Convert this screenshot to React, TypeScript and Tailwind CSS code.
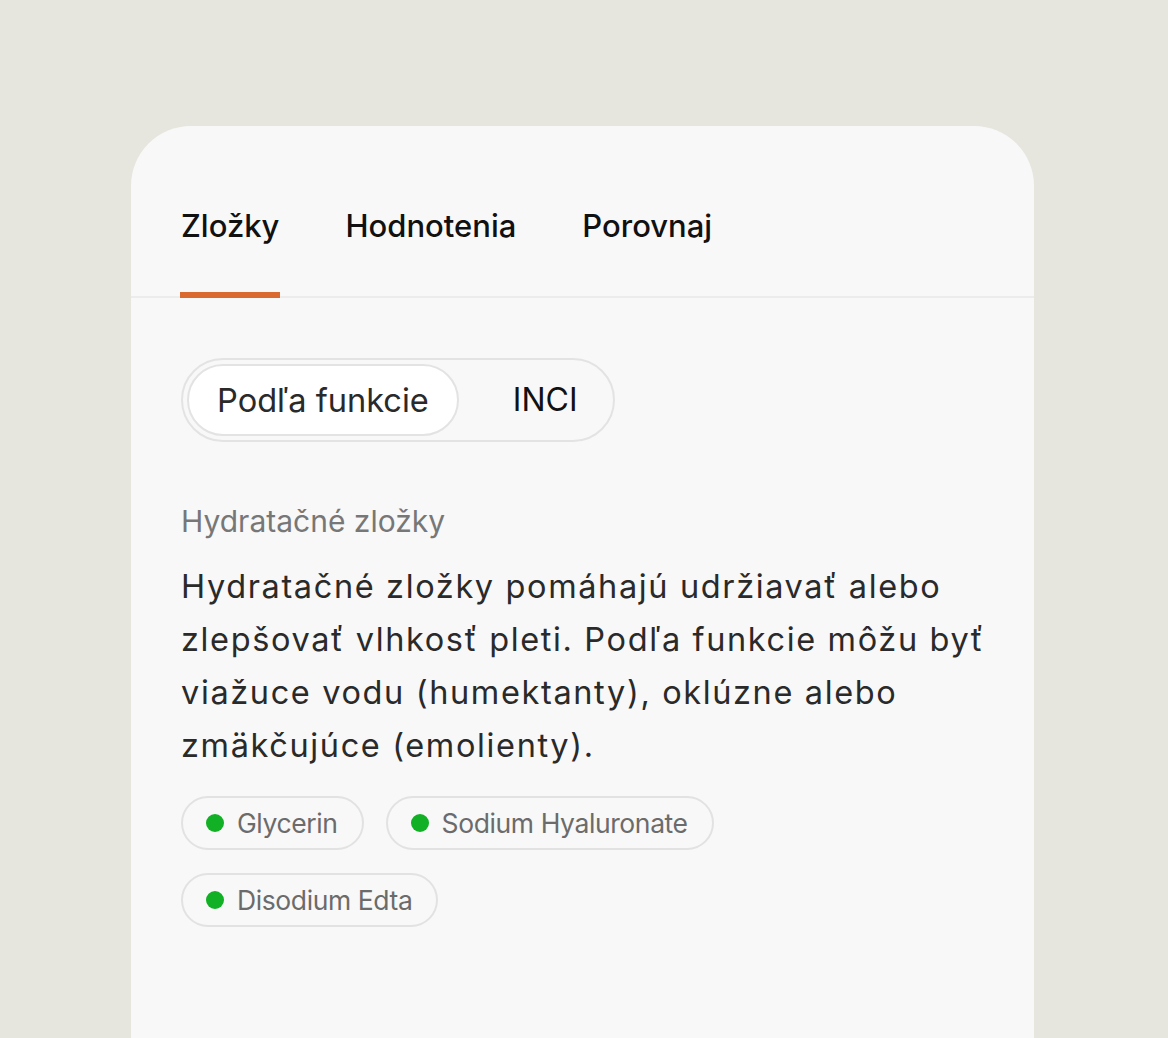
import React, { useState } from 'react';

const ingredients = ['Glycerin', 'Sodium Hyaluronate', 'Disodium Edta'];
const tabs = ['Zložky', 'Hodnotenia', 'Porovnaj'];

function Chip({ name }: { name: string }) {
  return (
    <span className="flex h-[54px] items-center gap-[13px] rounded-full border-2 border-[#e2e2e2] pl-[23px] pr-[24px]">
      <span className="h-[18px] w-[18px] rounded-full bg-[#12b024]" />
      <span className="text-[26.5px] leading-none tracking-[-0.015em] text-[#6b6b6b]">{name}</span>
    </span>
  );
}

export default function App() {
  const [tab, setTab] = useState(0);
  const [mode, setMode] = useState<'func' | 'inci'>('func');

  return (
    <div className="min-h-[1038px] bg-[#e6e6df] pt-[126px] font-['Inter',sans-serif]">
      <div className="ml-[131px] h-[912px] w-[903px] overflow-hidden rounded-t-[60px] bg-[#f8f8f8]">
        {/* Tabs */}
        <div className="flex gap-[66px] border-b-2 border-[#ececec] px-[50px] pt-[80px]">
          {tabs.map((t, i) => (
            <button
              key={t}
              onClick={() => setTab(i)}
              className="relative pb-[50px] text-[31px] font-medium leading-[40px] text-[#111]"
            >
              {t}
              {tab === i && (
                <span className="absolute -bottom-[2px] left-[-1px] right-[-1px] h-[6px] bg-[#d9692e]" />
              )}
            </button>
          ))}
        </div>

        <div className="px-[50px] pt-[60px]">
          {/* Segmented control */}
          <div className="inline-flex items-center rounded-full border-2 border-[#e3e3e3] p-[4px]">
            <button
              onClick={() => setMode('func')}
              className={`h-[72px] rounded-full px-[28px] text-[32.6px] leading-none text-[#2a2a2a] ${
                mode === 'func' ? 'border-2 border-[#e3e3e3] bg-white' : 'border-2 border-transparent'
              }`}
            >
              Podľa funkcie
            </button>
            <button
              onClick={() => setMode('inci')}
              className={`h-[72px] rounded-full pl-[52px] pr-[29px] text-[32px] leading-none text-[#111] ${
                mode === 'inci' ? 'border-2 border-[#e3e3e3] bg-white' : 'border-2 border-transparent'
              }`}
            >
              INCI
            </button>
          </div>

          {/* Section */}
          <div className="mt-[59px] text-[30px] leading-[40px] text-[#777]">Hydratačné zložky</div>
          <p className="mt-[19px] w-[815px] text-[32.5px] leading-[53px] tracking-[0.05em] text-[#2a2a2a]">
            Hydratačné zložky pomáhajú udržiavať alebo zlepšovať vlhkosť pleti. Podľa funkcie môžu byť
            viažuce vodu (humektanty), oklúzne alebo zmäkčujúce (emolienty).
          </p>

          <div className="mt-[24px] flex flex-wrap gap-x-[22px] gap-y-[23px]">
            {ingredients.map((n) => (
              <Chip key={n} name={n} />
            ))}
          </div>
        </div>
      </div>
    </div>
  );
}
